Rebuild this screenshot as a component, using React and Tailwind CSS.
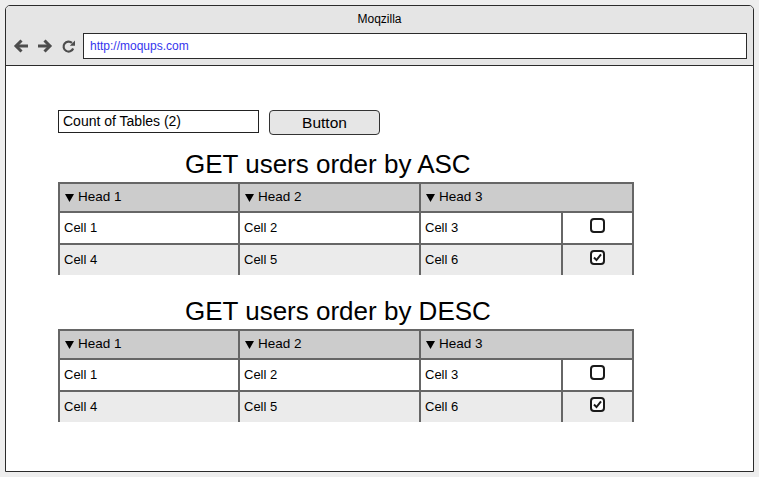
import React from 'react';

// Browser chrome mockup with two simple data tables

function BackIcon() {
  return (
    <svg width="16" height="14" viewBox="0 0 16 14" fill="none" stroke="#4d4d4d" strokeWidth="3">
      <path d="M15 7H3" />
      <path d="M8.5 1.5L3 7l5.5 5.5" strokeLinejoin="miter" />
    </svg>
  );
}

function ForwardIcon() {
  return (
    <svg width="16" height="14" viewBox="0 0 16 14" fill="none" stroke="#4d4d4d" strokeWidth="3">
      <path d="M1 7h12" />
      <path d="M7.5 1.5L13 7l-5.5 5.5" strokeLinejoin="miter" />
    </svg>
  );
}

function ReloadIcon() {
  return (
    <svg width="15" height="15" viewBox="0 0 15 15" fill="none">
      <path d="M12.2 9.5A5 5 0 1 1 11 3.9" stroke="#4d4d4d" strokeWidth="2.2" />
      <path d="M14 1.5v5.2H8.8z" fill="#4d4d4d" />
    </svg>
  );
}

function Caret() {
  return (
    <svg width="9" height="8" viewBox="0 0 9 8" className="shrink-0">
      <path d="M0 0h9L4.5 8z" fill="#000" />
    </svg>
  );
}

function Checkbox({ checked }) {
  return (
    <svg width="15" height="15" viewBox="0 0 15 15">
      <rect x="1" y="1" width="13" height="13" rx="3" fill="#fff" stroke="#1a1a1a" strokeWidth="2" />
      {checked && (
        <path d="M4 7.5l2.5 2.6L11 4.4" fill="none" stroke="#1a1a1a" strokeWidth="2" />
      )}
    </svg>
  );
}

function HeadCell({ label, className }) {
  return (
    <div className={`flex items-center gap-[4px] pl-[5px] ${className}`}>
      <Caret />
      <span>{label}</span>
    </div>
  );
}

function Row({ cells, checked, shaded }) {
  return (
    <div className={`flex h-[32px] border-t-2 border-[#666] ${shaded ? 'bg-[#ebebeb]' : 'bg-white'}`}>
      <div className="w-[180px] border-r-2 border-[#666] flex items-center pl-[4px]">{cells[0]}</div>
      <div className="w-[181px] border-r-2 border-[#666] flex items-center pl-[4px]">{cells[1]}</div>
      <div className="w-[142px] border-r-2 border-[#666] flex items-center pl-[4px]">{cells[2]}</div>
      <div className="flex-1 flex items-center justify-center pb-[5px]">
        <Checkbox checked={checked} />
      </div>
    </div>
  );
}

function DataTable() {
  return (
    <div className="w-[576px] border-t-2 border-x-2 border-[#666] text-[13px] text-black">
      <div className="flex h-[27px] bg-[#cccccc] text-[13.5px]">
        <HeadCell label="Head 1" className="w-[180px] border-r-2 border-[#666]" />
        <HeadCell label="Head 2" className="w-[181px] border-r-2 border-[#666]" />
        <HeadCell label="Head 3" className="flex-1" />
      </div>
      <Row cells={['Cell 1', 'Cell 2', 'Cell 3']} checked={false} />
      <Row cells={['Cell 4', 'Cell 5', 'Cell 6']} checked shaded />
    </div>
  );
}

export default function App() {
  return (
    <div className="w-[759px] h-[477px] bg-[#eeeeee] pt-[5px] pl-[5px] font-['Liberation_Sans',Arial,sans-serif]">
      <div className="w-[749px] h-[467px] border border-[#2b2b2b] rounded-t-[5px] overflow-hidden flex flex-col bg-white">
        <div className="bg-[#e5e5e5] border-b border-[#2b2b2b] pt-[5px] pb-[6px]">
          <div className="text-center text-[12px] leading-[16px] text-black">Moqzilla</div>
          <div className="mt-[6px] flex items-center pl-[7px] pr-[6px]">
            <BackIcon />
            <div className="ml-[8px]"><ForwardIcon /></div>
            <div className="ml-[8px]"><ReloadIcon /></div>
            <div className="ml-[7px] flex-1 h-[26px] border border-[#2b2b2b] bg-white flex items-center pl-[6px] text-[12px] text-[#3535ee]">
              http://moqups.com
            </div>
          </div>
        </div>

        <div className="flex-1 pl-[52px] pt-[44px]">
          <div className="flex items-start">
            <div className="w-[201px] h-[23px] border border-[#222] flex items-center pl-[4px] text-[14px] text-black">
              Count of Tables (2)
            </div>
            <button
              type="button"
              className="ml-[10px] w-[111px] h-[25px] rounded-[4px] border border-[#333] bg-[#e6e6e6] text-[15.5px] text-black flex items-center justify-center"
            >
              Button
            </button>
          </div>

          <div className="mt-[14px] ml-[127px] text-[26px] leading-[30px] text-black">GET users order by ASC</div>
          <div className="mt-[3px]">
            <DataTable />
          </div>

          <div className="mt-[21px] ml-[127px] text-[26px] leading-[30px] text-black">GET users order by DESC</div>
          <div className="mt-[3px]">
            <DataTable />
          </div>
        </div>
      </div>
    </div>
  );
}
